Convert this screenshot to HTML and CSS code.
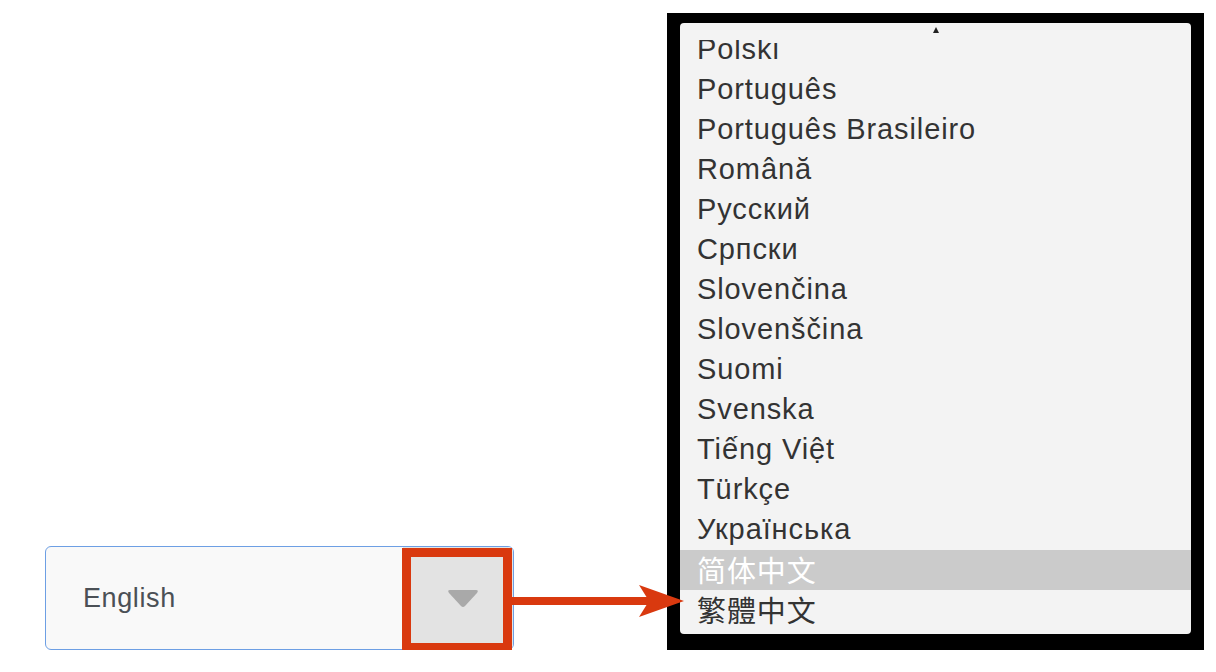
FILE: index.html
```html
<!DOCTYPE html>
<html lang="en">
<head>
  <meta charset="UTF-8" />
  <title>Language select</title>
  <link rel="stylesheet" href="styles.css">
</head>
<body>
  <div class="stage">
    <!-- the closed select, with the callout pointing at its button -->
    <div class="select-wrap">
      <div class="select">
        <span class="select-value">English</span>
        <span class="select-btn">
          <svg class="caret" width="32" height="19" viewBox="0 0 32 19">
            <path d="M3 1 H29 Q32 1 30 4 L18 17 Q16 19 14 17 L2 4 Q0 1 3 1 Z" fill="#a9a9a9" />
          </svg>
        </span>
      </div>
      <div class="callout-box"></div>
      <svg class="callout-arrow" width="172" height="32" viewBox="0 0 172 32">
        <rect x="0" y="12" width="140" height="8" fill="#d9390f" />
        <polygon points="127,0 172,16 127,32 137,16" fill="#d9390f" />
      </svg>
    </div>

    <!-- the open list, as the OS draws it -->
    <div class="frame">
      <div class="menu">
        <div class="scroll-up"><span class="up-caret"></span></div>
        <div class="viewport">
          <ul class="options">
            <li>Polski</li>
            <li>Português</li>
            <li>Português Brasileiro</li>
            <li>Română</li>
            <li>Русский</li>
            <li>Српски</li>
            <li>Slovenčina</li>
            <li>Slovenščina</li>
            <li>Suomi</li>
            <li>Svenska</li>
            <li>Tiếng Việt</li>
            <li>Türkçe</li>
            <li>Українська</li>
            <li class="active" lang="zh-Hans">简体中文</li>
            <li lang="zh-Hant">繁體中文</li>
          </ul>
        </div>
      </div>
    </div>
  </div>
</body>
</html>
```

FILE: styles.css
```css
body {
  margin: 0;
  background: #fff;
  font-family: 'Liberation Sans', Arial, 'Noto Sans CJK SC', sans-serif;
}
.stage {
  display: flex;
  align-items: flex-end;
  height: 650px;
  padding-left: 45px;
}
.select-wrap {
  position: relative;
  width: 469px;
  height: 104px;
}
.select {
  display: flex;
  align-items: stretch;
  height: 100%;
  box-sizing: border-box;
  border: 1.5px solid #6d9fe4;
  border-radius: 6px;
  background: #f9f9f9;
  overflow: hidden;
}
.select-value {
  flex: 1;
  display: flex;
  align-items: center;
  padding-left: 37px;
  font-size: 27px;
  letter-spacing: 0.6px;
  color: #4b5056;
}
.select-btn {
  width: 110px;
  display: flex;
  align-items: center;
  justify-content: center;
  background: #e3e3e3;
}
.caret {
  margin-left: 10px;
}
.callout-box {
  position: absolute;
  left: 357px;
  top: 2px;
  width: 110px;
  height: 104px;
  box-sizing: border-box;
  border: 9px solid #d9390f;
}
.callout-arrow {
  position: absolute;
  left: 467px;
  top: 39px;
}
.frame {
  width: 537px;
  height: 637px;
  margin-left: 153px;
  box-sizing: border-box;
  padding: 10px 13px 16px 13px;
  background: #000;
}
.menu {
  display: flex;
  flex-direction: column;
  height: 100%;
  background: #f3f3f3;
  border-radius: 4px;
  overflow: hidden;
}
.scroll-up {
  height: 17px;
  display: flex;
  justify-content: center;
  padding-top: 4px;
  box-sizing: border-box;
}
.up-caret {
  width: 0;
  height: 0;
  border-left: 3px solid transparent;
  border-right: 3px solid transparent;
  border-bottom: 6px solid #222;
}
.viewport {
  height: 590px;
  overflow: hidden;
}
.options {
  list-style: none;
  margin: -10px 0 0 0;
  padding: 0;
}
.options li {
  height: 40px;
  line-height: 38px;
  padding-left: 17px;
  font-size: 29px;
  letter-spacing: 0.9px;
  color: #333;
  white-space: nowrap;
}
.options li:lang(zh-Hans) {
  font-family: 'Noto Sans CJK SC', sans-serif;
  font-size: 29px;
}
.options li:lang(zh-Hant) {
  font-family: 'Noto Sans CJK TC', sans-serif;
  font-size: 29px;
}
.options li.active {
  background: #cbcbcb;
  color: #fff;
}
```
